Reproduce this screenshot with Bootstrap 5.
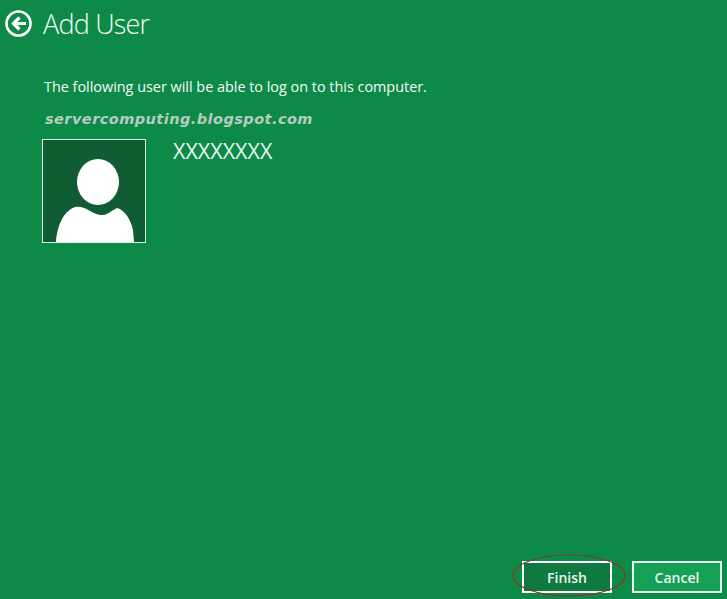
<!DOCTYPE html>
<html lang="en">

<head>
    <meta charset="UTF-8">
    <meta name="viewport" content="width=device-width, initial-scale=1.0">
    <title>Add User</title>
    <link href="https://cdn.jsdelivr.net/npm/bootstrap@5.3.0/dist/css/bootstrap.min.css" rel="stylesheet">
    <style>
        html, body { height: 100%; overflow: hidden; }
        body { background: #0e8a48; color: #fff; font-family: "Open Sans", "Liberation Sans", sans-serif; }
        .wizard { height: 599px; padding: 0 5px 6px 5px; }
        .wizard-head { height: 47px; padding-top: 10px; }
        .back-icon { width: 27px; height: 27px; display: block; }
        .wizard-title { font-size: 27px; font-weight: 300; line-height: 27px; letter-spacing: -.8px; margin: 0 0 0 11px; color: #f2fbf5; }
        .wizard-body { padding-left: 37px; }
        .intro { font-size: 14.4px; line-height: 20px; margin: 30px 0 0 2px; color: #f4fbf7; }
        .stamp { font-family: "DejaVu Sans", sans-serif; font-size: 14.5px; font-weight: 700; font-style: italic; line-height: 20px; letter-spacing: .45px; margin: 12px 0 0 3px; color: #b5cdbc; }
        .user-row { margin-top: 10px; }
        .avatar-box { width: 104px; height: 104px; background: #105c33; border: 1px solid #d5f5e2; display: block; }
        .user-name { font-size: 21.5px; line-height: 24px; margin: 0 0 0 27px; color: #e6f8ee; }
        .wizard-foot { gap: 20px; }
        .finish-wrap { position: relative; }
        .win-btn { width: 90px; height: 32px; padding: 0; border-radius: 0; font-size: 14px; font-weight: 600; color: #e8f8ef; border: 2px solid #e6f7ee; background: #16a055; }
        .win-btn:hover { color: #e8f8ef; border-color: #e6f7ee; background: #16a055; }
        .win-btn-dark { background: #0f7a40; border-color: #fff; }
        .win-btn-dark:hover { background: #0f7a40; border-color: #fff; }
        .red-ring { position: absolute; left: -10px; top: -7px; width: 114px; height: 43px; pointer-events: none; }
    </style>
</head>

<body>
    <div class="wizard d-flex flex-column">
        <div class="wizard-head d-flex align-items-start">
            <svg class="back-icon" viewBox="0 0 27 27">
                <circle cx="13.5" cy="13.5" r="12" fill="none" stroke="#fff" stroke-width="2.6"/>
                <path d="M14.5 7.5 8.5 13.5 14.5 19.5 M9 13.5H21" fill="none" stroke="#fff" stroke-width="3.2"/>
            </svg>
            <h1 class="wizard-title">Add User</h1>
        </div>

        <div class="wizard-body">
            <p class="intro">The following user will be able to log on to this computer.</p>
            <p class="stamp">servercomputing.blogspot.com</p>
            <div class="user-row d-flex align-items-start">
                <svg class="avatar-box" viewBox="0 0 102 102">
                    <ellipse cx="55" cy="42" rx="21" ry="23" fill="#fff"/>
                    <path d="M13 102C14 88 19 72 32 67 42 65 50 75 59 75 65 75 69 70 74 68 82 70 88 80 90 90L91 102Z" fill="#fff"/>
                </svg>
                <div class="user-name">XXXXXXXX</div>
            </div>
        </div>

        <div class="wizard-foot d-flex justify-content-end mt-auto">
            <div class="finish-wrap">
                <button type="button" class="btn win-btn win-btn-dark">Finish</button>
                <svg class="red-ring" viewBox="0 0 114 43">
                    <ellipse cx="57" cy="21.5" rx="56" ry="20.5" fill="none" stroke="#8c2f2c" stroke-width="1.2"/>
                </svg>
            </div>
            <button type="button" class="btn win-btn">Cancel</button>
        </div>
    </div>
</body>

</html>
